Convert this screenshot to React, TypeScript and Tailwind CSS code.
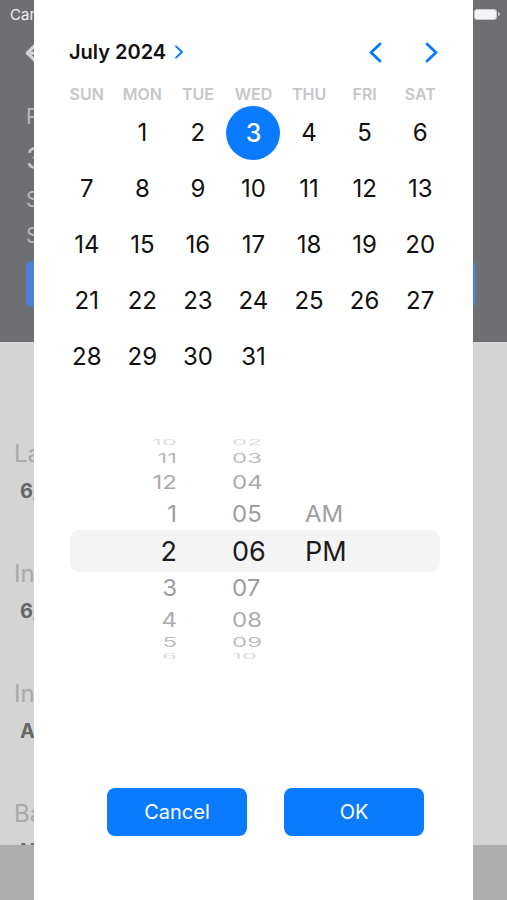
import React from "react";
import { ArrowLeft } from "lucide-react";

const weekdays = ["SUN", "MON", "TUE", "WED", "THU", "FRI", "SAT"];
const days: (number | null)[] = [
  null, 1, 2, 3, 4, 5, 6,
  7, 8, 9, 10, 11, 12, 13,
  14, 15, 16, 17, 18, 19, 20,
  21, 22, 23, 24, 25, 26, 27,
  28, 29, 30, 31, null, null, null,
];

const wheelRows = [
  { h: "h-[14px]", t: "text-[24px] scale-y-[0.3] text-[#dcdcdc]" },
  { h: "h-[18.5px]", t: "text-[24px] scale-y-[0.55] text-[#bcbcbc]" },
  { h: "h-[28px]", t: "text-[24px] scale-y-[0.8] text-[#ababab]" },
  { h: "h-[35.5px]", t: "text-[24px] scale-y-[0.97] text-[#9e9e9e]" },
  { h: "h-[38.5px]", t: "text-[27px] text-[#1c1c1e]" },
  { h: "h-[35.5px]", t: "text-[24px] scale-y-[0.97] text-[#9e9e9e]" },
  { h: "h-[28px]", t: "text-[24px] scale-y-[0.82] text-[#ababab]" },
  { h: "h-[18px]", t: "text-[24px] scale-y-[0.55] text-[#bcbcbc]" },
  { h: "h-[10px]", t: "text-[24px] scale-y-[0.3] text-[#dcdcdc]" },
];

const hours = ["10", "11", "12", "1", "2", "3", "4", "5", "6"];
const minutes = ["02", "03", "04", "05", "06", "07", "08", "09", "10"];
const ampm = ["", "", "", "AM", "PM", "", "", "", ""];

function WheelColumn({ items, align, width }: { items: string[]; align: string; width: string }) {
  return (
    <div className={`flex flex-col ${align} ${width}`}>
      {wheelRows.map((r, i) => (
        <div key={i} className={`${r.h} flex items-center`}>
          <span className={`leading-none whitespace-nowrap ${r.t}`}>{items[i]}</span>
        </div>
      ))}
    </div>
  );
}

function Chevron({ dir, className }: { dir: "l" | "r"; className: string }) {
  return (
    <svg viewBox="0 0 13 21" className={className} fill="none">
      {dir === "r" ? (
        <polyline points="2,2 11,10.5 2,19" stroke="#007aff" strokeWidth="2.8" strokeLinecap="round" strokeLinejoin="round" />
      ) : (
        <polyline points="11,2 2,10.5 11,19" stroke="#007aff" strokeWidth="2.8" strokeLinecap="round" strokeLinejoin="round" />
      )}
    </svg>
  );
}

export default function App() {
  return (
    <div className="relative w-[507px] h-[900px] overflow-hidden flex flex-col" style={{ fontFamily: "Inter, 'Noto Sans', sans-serif" }}>
      {/* Background: dimmed app screen */}
      <div className="h-[342px] bg-[#6e6e73] flex flex-col">
        <div className="h-[28px] flex items-center justify-between pl-[10px] pr-[7px]">
          <span className="text-[15px] text-[#f0f0f2] leading-none">Carrier</span>
          <div className="flex items-center">
            <div className="w-[23px] h-[11px] rounded-[3px] border border-[#c8c8cc] bg-[#f4f4f6]" />
            <div className="w-[2px] h-[4px] bg-[#c8c8cc] rounded-r-sm ml-[1px]" />
          </div>
        </div>
        <div className="h-[50px] flex items-center pl-[22px]">
          <ArrowLeft size={26} strokeWidth={3} color="#d4d4d8" />
        </div>
        <div className="flex">
          <div className="flex-1 flex flex-col pl-[26px]">
            <div className="mt-[26px] h-[24px] flex items-center text-[21px] leading-none text-[#b8b8bd]">Remaining Days</div>
            <div className="mt-[15px] h-[30px] flex items-center text-[30px] leading-none text-[#c6c6ca]">30</div>
            <div className="mt-[14px] h-[24px] flex items-center text-[21px] leading-none text-[#b8b8bd]">Start Date</div>
            <div className="mt-[12px] h-[24px] flex items-center text-[21px] leading-none text-[#b8b8bd]">Service Date</div>
          </div>
          <div className="w-[60px] pt-[62px]">
            <svg viewBox="0 0 60 110" className="w-[60px] h-[110px]">
              <polygon points="0,0 10,18 17,95 4,107 0,107" fill="#b9b9bd" />
              <circle cx="11" cy="60" r="4" fill="none" stroke="#c9c9cc" strokeWidth="1.5" />
            </svg>
          </div>
        </div>
        <div className="mt-[11px] ml-[26px] w-[450px] h-[46px] rounded-[5px] bg-[#4a7fd6]" />
      </div>
      <div className="h-[503px] bg-[#d4d4d4] overflow-hidden flex flex-col">
        {[
          ["Last Service", "6/12/2024"],
          ["Inspection Date", "6/20/2024"],
          ["Insurance", "Allstate"],
          ["Battery", "N/A"],
        ].map(([label, value], i) => (
          <div key={i} className={`flex flex-col ${i === 0 ? "mt-[100px]" : "mt-[61.5px]"}`}>
            <div className="h-[24px] flex items-center pl-[14px] text-[24px] leading-none text-[#a9a9a9]">{label}</div>
            <div className="mt-[14.5px] h-[20px] flex items-center pl-[20px] text-[20px] font-bold leading-none text-[#676767]">{value}</div>
          </div>
        ))}
      </div>
      <div className="flex-1 bg-[#adadad]" />

      {/* Modal sheet */}
      <div className="absolute left-[34px] top-0 w-[439px] h-[900px] bg-white px-[25px] flex flex-col">
        <div className="mt-[32px] h-[40px] px-[10px] flex items-center justify-between">
          <div className="flex items-center">
            <span className="text-[20px] font-semibold leading-none text-[#111111]">July 2024</span>
            <Chevron dir="r" className="ml-[8px] w-[10px] h-[14px]" />
          </div>
          <div className="flex items-center gap-[43px]">
            <Chevron dir="l" className="w-[13px] h-[21px]" />
            <Chevron dir="r" className="w-[13px] h-[21px]" />
          </div>
        </div>
        <div className="mt-[12px] h-[20px] grid grid-cols-7">
          {weekdays.map((d) => (
            <div key={d} className="flex items-center justify-center text-[16px] font-semibold leading-none text-[#c6c6c8]">
              {d}
            </div>
          ))}
        </div>
        <div className="mt-[1px] grid grid-cols-7">
          {days.map((d, i) => (
            <div key={i} className="h-[56px] flex items-center justify-center">
              {d === 3 ? (
                <div className="w-[54px] h-[54px] rounded-full bg-[#0a7aff] flex items-center justify-center text-[25px] font-medium leading-none text-white">
                  3
                </div>
              ) : (
                <span className="text-[24px] leading-none text-[#111111]">{d ?? ""}</span>
              )}
            </div>
          ))}
        </div>

        {/* Time wheel */}
        <div className="relative mt-[51px] ml-[11px] w-[370px] h-[226px]">
          <div className="absolute left-0 top-[94px] w-[370px] h-[42px] rounded-[9px] bg-[#f4f4f4]" />
          <div className="relative flex">
            <WheelColumn items={hours} align="items-end" width="w-[107px]" />
            <WheelColumn items={minutes} align="items-start" width="ml-[55px] w-[40px]" />
            <WheelColumn items={ampm} align="items-start" width="ml-[33px] w-[60px]" />
          </div>
        </div>

        <div className="mt-[126px] ml-[48px] flex gap-[37px]">
          <button className="w-[140px] h-[48px] rounded-[8px] bg-[#0a7aff] text-white text-[20px] leading-none">Cancel</button>
          <button className="w-[140px] h-[48px] rounded-[8px] bg-[#0a7aff] text-white text-[20px] leading-none">OK</button>
        </div>
      </div>
    </div>
  );
}
